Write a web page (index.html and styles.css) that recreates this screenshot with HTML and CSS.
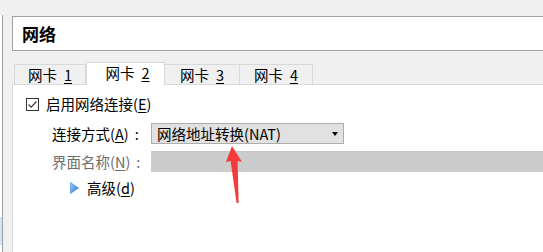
FILE: index.html
```html
<!DOCTYPE html>
<html lang="zh-CN">
  <head>
    <meta charset="utf-8">
    <title>网络</title>
    <link rel="stylesheet" href="styles.css">
  </head>
  <body>
    <div class="window">
      <div class="side"><div class="side-edge"></div></div>

      <div class="main">
        <div class="title">网络</div>

        <div class="tabs">
          <div class="tab tab1">网卡<u>1</u></div>
          <div class="tab tab2 active">网卡<u>2</u></div>
          <div class="tab tab3">网卡<u>3</u></div>
          <div class="tab tab4">网卡<u>4</u></div>
        </div>

        <div class="panel">
          <div class="row check-row">
            <span class="checkbox">
              <svg width="11" height="11" viewBox="0 0 11 11"><path d="M1.5 5.5 L4.2 8.2 L9.5 2.5" fill="none" stroke="#3a3a3a" stroke-width="1.2"/></svg>
            </span>
            <span>启用网络连接(<u>E</u>)</span>
          </div>

          <div class="row field-row">
            <span class="label">连接方式(<u>A</u>)<span class="colon">:</span></span>
            <div class="select">
              <span>网络地址转换(NAT)</span>
              <span class="caret"></span>
            </div>
          </div>

          <div class="row field-row disabled">
            <span class="label">界面名称(<u>N</u>)<span class="colon">:</span></span>
            <div class="input-off"></div>
          </div>

          <div class="row adv-row">
            <svg class="expander" width="9" height="12" viewBox="0 0 9 12">
              <defs>
                <linearGradient id="tri" x1="0" y1="0" x2="1" y2="1">
                  <stop offset="0" stop-color="#9fd3fb"/>
                  <stop offset="1" stop-color="#1a6fd0"/>
                </linearGradient>
              </defs>
              <polygon points="0.5,0.5 8.5,6 0.5,11.5" fill="url(#tri)" stroke="#3a86d8" stroke-width="0.6"/>
            </svg>
            <span>高级(<u>d</u>)</span>
          </div>
        </div>
      </div>
    </div>

    <!-- annotation arrow drawn over the screenshot -->
    <svg class="arrow" width="543" height="252" viewBox="0 0 543 252">
      <polygon points="232,146 242,162 237.6,161 238.6,203 236.6,203 230.6,161 226,162" fill="#f33b3b"/>
    </svg>
  </body>
</html>
```

FILE: styles.css
```css
body{
  margin:0;
  background-color:#f0f0f0;
  font-family:"Noto Sans CJK SC", "Noto Sans", sans-serif;
  font-size:14.5px;
  color:#000;
  overflow:hidden;
}
u{
  text-decoration:underline;
  text-underline-offset:2px;
}
.window{
  display:flex;
  height:252px;
  width:543px;
}
.side{
  width:12px;
  flex:none;
}
.side-edge{
  margin-top:15px;
  width:2px;
  height:237px;
  border-right:1px solid #a0a0a0;
  background:linear-gradient(#fff 202px, #cfe4f7 202px 230px, #fff 230px);
}
.main{
  flex:1;
  display:flex;
  flex-direction:column;
  padding-top:16px;
  min-width:0;
}
.title{
  height:33px;
  border:1px solid #a0a0a0;
  border-right:none;
  background-color:#fff;
  font-weight:bold;
  font-size:17px;
  line-height:33px;
  padding-left:9px;
}

/* tabs */
.tabs{
  height:33px;
  display:flex;
  align-items:flex-end;
  padding-left:2px;
}
.tab{
  box-sizing:border-box;
  height:20px;
  border:1px solid #d9d9d9;
  border-bottom:none;
  background-color:#f0f0f0;
  display:flex;
  align-items:center;
  justify-content:center;
  line-height:16px;
}
.tab u{
  margin-left:7px;
}
.tab1{ width:72px; }
.tab2{ width:79px; }
.tab3{ width:75px; border-left:none; }
.tab4{ width:73px; border-left:none; }
.tab.active{
  height:23px;
  margin-bottom:-1px;
  background-color:#fff;
  position:relative;
  padding-left:4px;
  padding-bottom:2px;
}

/* panel */
.panel{
  flex:1;
  background-color:#fff;
  border-top:1px solid #d9d9d9;
  border-left:1px solid #d9d9d9;
  padding-top:12px;
}
.row{
  display:flex;
  align-items:center;
  line-height:16px;
}
.check-row{
  height:14px;
  padding-left:13px;
}
.checkbox{
  box-sizing:border-box;
  width:13px;
  height:13px;
  border:1px solid #333;
  margin-right:7px;
  display:flex;
  align-items:center;
  justify-content:center;
}
.field-row{
  height:21px;
  margin-top:12px;
  padding-left:39px;
}
.field-row.disabled{
  margin-top:7px;
}
.label{
  width:99px;
  flex:none;
}
.colon{
  margin-left:6px;
}
.disabled .label{
  color:#6d6d6d;
}
.select{
  box-sizing:border-box;
  width:193px;
  height:21px;
  background-color:#e1e1e1;
  border:1px solid #adadad;
  display:flex;
  align-items:center;
  justify-content:space-between;
  padding:0 5px 0 5px;
}
.caret{
  width:0;
  height:0;
  border-left:3.5px solid transparent;
  border-right:3.5px solid transparent;
  border-top:4px solid #000;
}
.input-off{
  flex:1;
  height:21px;
  box-sizing:border-box;
  background-color:#cccccc;
  border-top:1px solid #c4c4c4;
}
.adv-row{
  height:22px;
  margin-top:5px;
  padding-left:57px;
}
.expander{
  margin-right:8px;
}

.arrow{
  position:absolute;
  left:0;
  top:0;
  pointer-events:none;
}
```
